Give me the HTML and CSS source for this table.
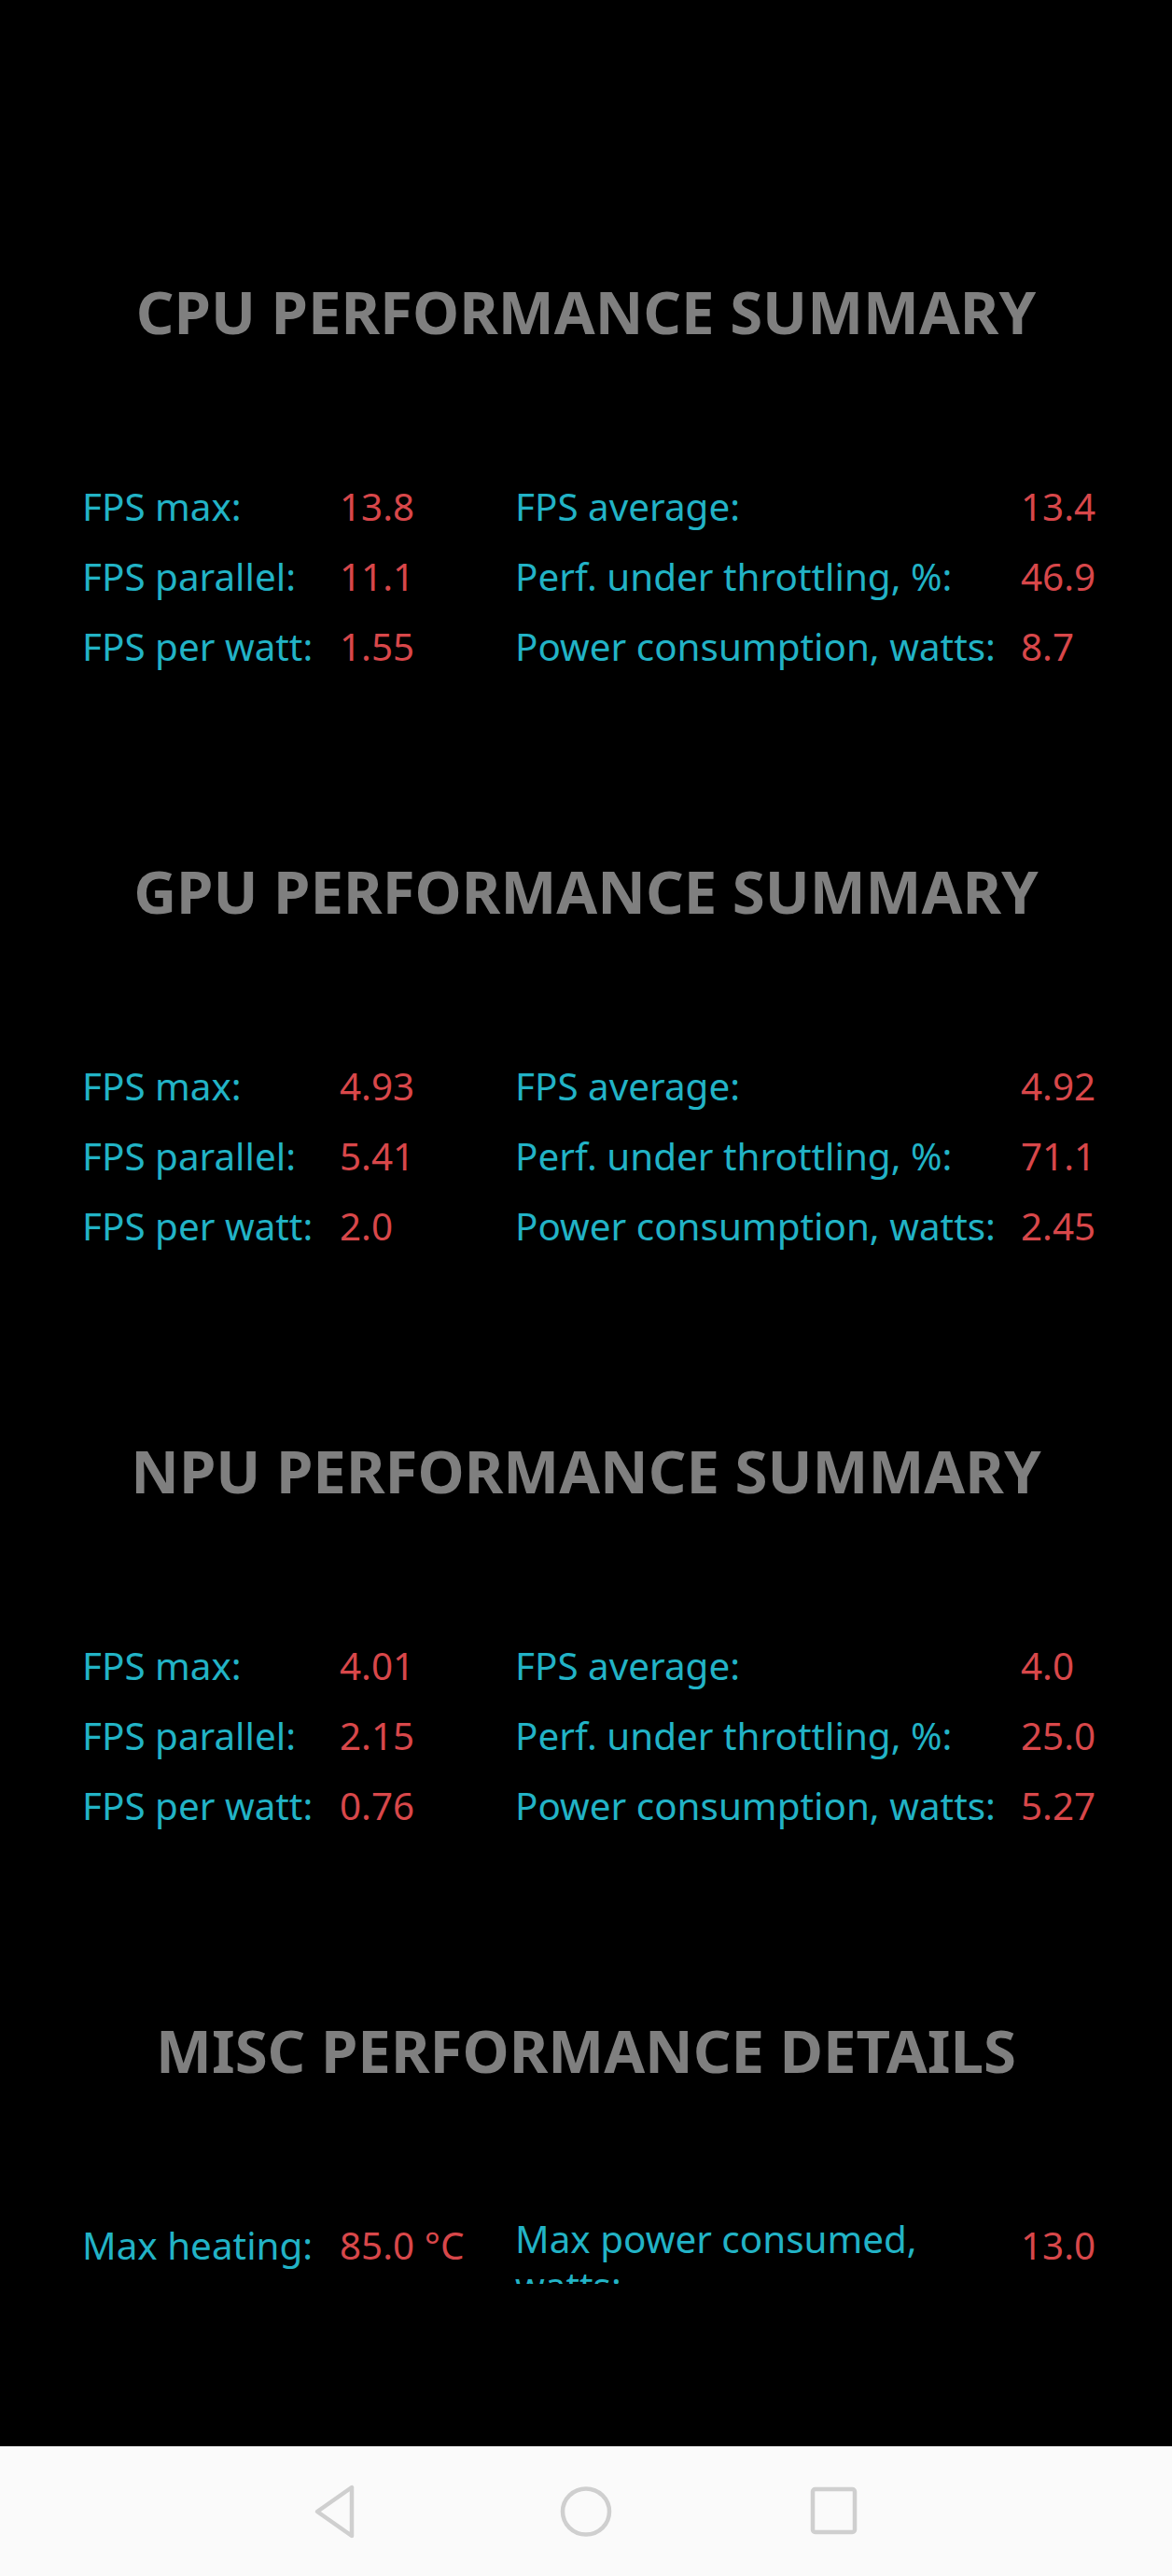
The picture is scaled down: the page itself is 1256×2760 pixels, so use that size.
FILE: index.html
```html
<!DOCTYPE html>
<html lang="en">
<head>
<meta charset="utf-8">
<title>Performance summary</title>
<link rel="stylesheet" href="styles.css">
</head>
<body>
<main class="screen">
  <section class="section">
    <h2 class="title">CPU PERFORMANCE SUMMARY</h2>
    <div class="stats">
      <span class="label">FPS max:</span><span class="value">13.8</span>
      <span class="label">FPS average:</span><span class="value">13.4</span>
      <span class="label">FPS parallel:</span><span class="value">11.1</span>
      <span class="label">Perf. under throttling, %:</span><span class="value">46.9</span>
      <span class="label">FPS per watt:</span><span class="value">1.55</span>
      <span class="label">Power consumption, watts:</span><span class="value">8.7</span>
    </div>
  </section>
  <section class="section">
    <h2 class="title">GPU PERFORMANCE SUMMARY</h2>
    <div class="stats">
      <span class="label">FPS max:</span><span class="value">4.93</span>
      <span class="label">FPS average:</span><span class="value">4.92</span>
      <span class="label">FPS parallel:</span><span class="value">5.41</span>
      <span class="label">Perf. under throttling, %:</span><span class="value">71.1</span>
      <span class="label">FPS per watt:</span><span class="value">2.0</span>
      <span class="label">Power consumption, watts:</span><span class="value">2.45</span>
    </div>
  </section>
  <section class="section">
    <h2 class="title">NPU PERFORMANCE SUMMARY</h2>
    <div class="stats">
      <span class="label">FPS max:</span><span class="value">4.01</span>
      <span class="label">FPS average:</span><span class="value">4.0</span>
      <span class="label">FPS parallel:</span><span class="value">2.15</span>
      <span class="label">Perf. under throttling, %:</span><span class="value">25.0</span>
      <span class="label">FPS per watt:</span><span class="value">0.76</span>
      <span class="label">Power consumption, watts:</span><span class="value">5.27</span>
    </div>
  </section>
  <section class="section">
    <h2 class="title">MISC PERFORMANCE DETAILS</h2>
    <div class="stats">
      <span class="label">Max heating:</span><span class="value">85.0 °C</span>
      <span class="label label-wrap">Max power consumed, watts:</span><span class="value">13.0</span>
    </div>
  </section>
</main>
<nav class="navbar">
  <div class="nav-item">
    <svg width="56" height="60" viewBox="0 0 56 60" aria-hidden="true">
      <path d="M43 4 L43 56 L6 30 Z" fill="none" stroke="#cfcfcf" stroke-width="4.5" stroke-linejoin="round"/>
    </svg>
  </div>
  <div class="nav-item">
    <svg width="60" height="60" viewBox="0 0 60 60" aria-hidden="true">
      <ellipse cx="30" cy="30" rx="25" ry="24.5" fill="none" stroke="#cfcfcf" stroke-width="4.5"/>
    </svg>
  </div>
  <div class="nav-item">
    <svg width="60" height="60" viewBox="0 0 60 60" aria-hidden="true">
      <rect x="7" y="6" width="45" height="46" rx="2.5" fill="none" stroke="#cfcfcf" stroke-width="4.5"/>
    </svg>
  </div>
</nav>
</body>
</html>
```

FILE: styles.css
```css
html, body {
  margin: 0;
  padding: 0;
  background: #000;
}

body {
  width: 1256px;
  font-family: "Noto Sans", "Open Sans", sans-serif;
}

.screen {
  height: 2621px;
  box-sizing: border-box;
  padding-top: 284px;
  overflow: hidden;
  background: #000;
}

.section {
  height: 621px;
}

.title {
  margin: 0;
  height: 100px;
  line-height: 100px;
  text-align: center;
  color: #7f7f7f;
  font-size: 63.5px;
  font-weight: 700;
  letter-spacing: 0;
}

.stats {
  margin-top: 121px;
  padding-left: 88px;
  display: grid;
  grid-template-columns: 276px 188px 542px 90px;
  grid-auto-rows: 75px;
  font-size: 40.4px;
  line-height: 75px;
}

.label {
  color: #22b3c6;
  white-space: nowrap;
}

.value {
  color: #d8474a;
  white-space: nowrap;
}

.label-wrap {
  white-space: normal;
  width: 470px;
  height: 73px;
  line-height: 50px;
  overflow: hidden;
  align-self: start;
  margin-top: 6px;
}

.navbar {
  height: 139px;
  background: #fafafa;
  display: flex;
  justify-content: center;
  align-items: center;
}

.nav-item {
  width: 266px;
  display: flex;
  justify-content: center;
  align-items: center;
}

.nav-item svg {
  display: block;
}
```
